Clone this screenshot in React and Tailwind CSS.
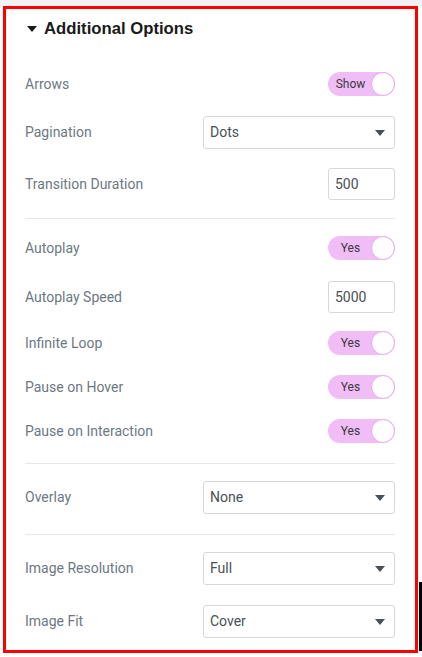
const font = { fontFamily: 'Roboto, "Liberation Sans", sans-serif' };

function Caret({ className = '' }) {
  return (
    <svg width="10" height="6" viewBox="0 0 10 6" className={className}>
      <path d="M0 0h10L5 6z" fill="currentColor" />
    </svg>
  );
}

function Row({ label, children, className = '' }) {
  return (
    <div className={`flex items-center justify-between ${className}`}>
      <span className="text-[14px] text-[#6d7882]">{label}</span>
      {children}
    </div>
  );
}

function Toggle({ text }) {
  return (
    <div className="flex h-[24px] w-[67px] items-center rounded-full bg-[#f0bdf7]">
      <span className="flex-1 pl-[2px] text-center text-[12px] text-[#3a3a3a]">{text}</span>
      <span className="h-[24px] w-[24px] rounded-full border border-[#e8a9f2] bg-white" />
    </div>
  );
}

function Select({ value }) {
  return (
    <div className="flex h-[33px] w-[192px] items-center justify-between rounded-[3px] border border-[#d5d8dc] pl-[6px] pr-[9px]">
      <span className="text-[14px] text-[#495157]">{value}</span>
      <Caret className="text-[#495157]" />
    </div>
  );
}

function NumberInput({ value }) {
  return (
    <div className="flex h-[32px] w-[67px] items-center rounded-[3px] border border-[#d5d8dc] pl-[6px]">
      <span className="text-[14px] text-[#495157]">{value}</span>
    </div>
  );
}

function Divider({ className = '' }) {
  return <div className={`h-px bg-[#e6e8ea] ${className}`} />;
}

export default function App() {
  return (
    <div className="h-[657px] w-[422px] overflow-hidden bg-white" style={font}>
      <div className="h-[6px] bg-[#f1f3f5]" />
      <div className="flex">
        <div className="ml-[3px] h-[647px] w-[415px] border-[3px] border-[#ff0000] bg-white pl-[19px] pr-[20px]">
          <div className="flex items-center pt-[10px]">
            <Caret className="ml-[2px] text-[#1a1a1a]" />
            <h2
              className="ml-[7px] text-[16.7px] font-bold leading-[20px] text-[#1a1a1a]"
              style={{ fontFamily: '"Liberation Sans", Arial, sans-serif' }}
            >
              Additional Options
            </h2>
          </div>

          <Row label="Arrows" className="mt-[33px]">
            <Toggle text="Show" />
          </Row>
          <Row label="Pagination" className="mt-[20px]">
            <Select value="Dots" />
          </Row>
          <Row label="Transition Duration" className="mt-[19px]">
            <NumberInput value="500" />
          </Row>

          <Divider className="mt-[18px]" />

          <Row label="Autoplay" className="mt-[17px]">
            <Toggle text="Yes" />
          </Row>
          <Row label="Autoplay Speed" className="mt-[21px]">
            <NumberInput value="5000" />
          </Row>
          <Row label="Infinite Loop" className="mt-[18px]">
            <Toggle text="Yes" />
          </Row>
          <Row label="Pause on Hover" className="mt-[20px]">
            <Toggle text="Yes" />
          </Row>
          <Row label="Pause on Interaction" className="mt-[20px]">
            <Toggle text="Yes" />
          </Row>

          <Divider className="mt-[20px]" />

          <Row label="Overlay" className="mt-[17px]">
            <Select value="None" />
          </Row>

          <Divider className="mt-[20px]" />

          <Row label="Image Resolution" className="mt-[17px]">
            <Select value="Full" />
          </Row>
          <Row label="Image Fit" className="mt-[20px]">
            <Select value="Cover" />
          </Row>
        </div>
        <div className="mb-[2px] ml-[1px] h-[69px] w-[3px] self-end bg-black" />
      </div>
    </div>
  );
}
